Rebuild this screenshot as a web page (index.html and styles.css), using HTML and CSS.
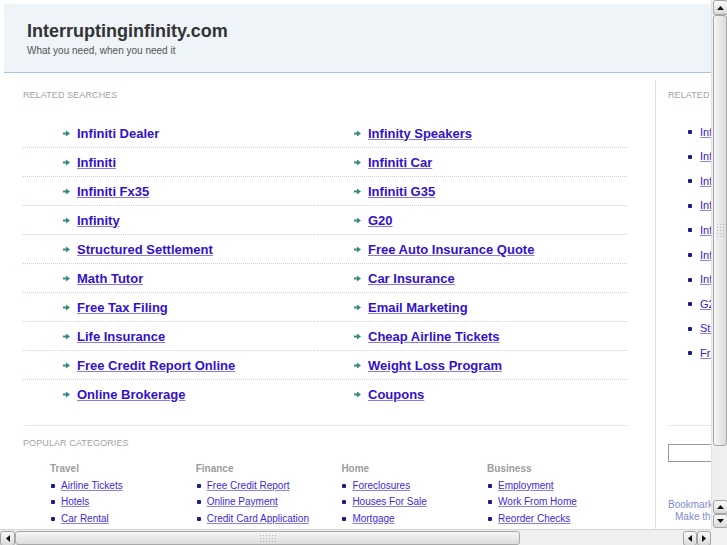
FILE: index.html
```html
<!DOCTYPE html>
<html lang="en">
<head>
    <meta charset="UTF-8">
    <title>Interruptinginfinity.com</title>
    <link rel="stylesheet" href="styles.css">
</head>
<body>
    <div class="window">
        <div class="viewport">
            <div class="page">
                <div class="header">
                    <h1>Interruptinginfinity.com</h1>
                    <p>What you need, when you need it</p>
                </div>

                <div class="content">
                    <div class="main">
                        <h2 class="label">Related Searches</h2>
                        <ul class="searches">
                            <li><a class="plain" href="#">Infiniti Dealer</a></li>
                            <li><a href="#">Infinity Speakers</a></li>
                            <li><a href="#">Infiniti</a></li>
                            <li><a href="#">Infiniti Car</a></li>
                            <li><a href="#">Infiniti Fx35</a></li>
                            <li><a href="#">Infiniti G35</a></li>
                            <li><a href="#">Infinity</a></li>
                            <li><a href="#">G20</a></li>
                            <li><a href="#">Structured Settlement</a></li>
                            <li><a href="#">Free Auto Insurance Quote</a></li>
                            <li><a href="#">Math Tutor</a></li>
                            <li><a href="#">Car Insurance</a></li>
                            <li><a href="#">Free Tax Filing</a></li>
                            <li><a href="#">Email Marketing</a></li>
                            <li><a href="#">Life Insurance</a></li>
                            <li><a href="#">Cheap Airline Tickets</a></li>
                            <li><a href="#">Free Credit Report Online</a></li>
                            <li><a href="#">Weight Loss Program</a></li>
                            <li><a href="#">Online Brokerage</a></li>
                            <li><a href="#">Coupons</a></li>
                        </ul>

                        <div class="popular">
                            <h2 class="label">Popular Categories</h2>
                            <div class="categories">
                                <div class="category">
                                    <h3>Travel</h3>
                                    <ul>
                                        <li><a href="#">Airline Tickets</a></li>
                                        <li><a href="#">Hotels</a></li>
                                        <li><a href="#">Car Rental</a></li>
                                    </ul>
                                </div>
                                <div class="category">
                                    <h3>Finance</h3>
                                    <ul>
                                        <li><a href="#">Free Credit Report</a></li>
                                        <li><a href="#">Online Payment</a></li>
                                        <li><a href="#">Credit Card Application</a></li>
                                    </ul>
                                </div>
                                <div class="category">
                                    <h3>Home</h3>
                                    <ul>
                                        <li><a href="#">Foreclosures</a></li>
                                        <li><a href="#">Houses For Sale</a></li>
                                        <li><a href="#">Mortgage</a></li>
                                    </ul>
                                </div>
                                <div class="category">
                                    <h3>Business</h3>
                                    <ul>
                                        <li><a href="#">Employment</a></li>
                                        <li><a href="#">Work From Home</a></li>
                                        <li><a href="#">Reorder Checks</a></li>
                                    </ul>
                                </div>
                            </div>
                        </div>
                    </div>

                    <div class="side">
                        <h2 class="label">Related Searches</h2>
                        <ul class="side-links">
                            <li><a href="#">Infiniti Dealer</a></li>
                            <li><a href="#">Infiniti</a></li>
                            <li><a href="#">Infiniti Fx35</a></li>
                            <li><a href="#">Infinity</a></li>
                            <li><a href="#">Infinity Speakers</a></li>
                            <li><a href="#">Infiniti Car</a></li>
                            <li><a href="#">Infiniti G35</a></li>
                            <li><a href="#">G20</a></li>
                            <li><a href="#">Structured Settlement</a></li>
                            <li><a href="#">Free Auto Insurance Quote</a></li>
                        </ul>
                        <div class="search-box">
                            <input type="text">
                        </div>
                        <div class="bookmark">
                            <p>Bookmark this page</p>
                            <p class="indent">Make this your homepage</p>
                        </div>
                    </div>
                </div>
            </div>
        </div>

        <div class="vbar">
            <div class="sbtn">
                <svg width="7" height="4" viewBox="0 0 7 4"><polygon points="0,4 7,4 3.5,0" fill="#111"/></svg>
            </div>
            <div class="thumb vthumb"><span class="grip"></span></div>
            <div class="track"></div>
            <div class="sbtn">
                <svg width="7" height="4" viewBox="0 0 7 4"><polygon points="0,4 7,4 3.5,0" fill="#111"/></svg>
            </div>
            <div class="sbtn">
                <svg width="7" height="4" viewBox="0 0 7 4"><polygon points="0,0 7,0 3.5,4" fill="#111"/></svg>
            </div>
        </div>

        <div class="hbar">
            <div class="sbtn">
                <svg width="4" height="7" viewBox="0 0 4 7"><polygon points="4,0 4,7 0,3.5" fill="#111"/></svg>
            </div>
            <div class="thumb hthumb"><span class="grip"></span></div>
            <div class="track"></div>
            <div class="sbtn">
                <svg width="4" height="7" viewBox="0 0 4 7"><polygon points="4,0 4,7 0,3.5" fill="#111"/></svg>
            </div>
            <div class="sbtn">
                <svg width="4" height="7" viewBox="0 0 4 7"><polygon points="0,0 0,7 4,3.5" fill="#111"/></svg>
            </div>
        </div>

        <div class="corner"></div>
    </div>
</body>
</html>
```

FILE: styles.css
```css
* {
    box-sizing: border-box;
}

body {
    margin: 0;
    overflow: hidden;
    font-family: "Liberation Sans", Arial, sans-serif;
    background: #ffffff;
}

ul {
    list-style: none;
    margin: 0;
    padding: 0;
}

.window {
    display: grid;
    grid-template-columns: 711px 16px;
    grid-template-rows: 529px 16px;
    width: 727px;
    height: 545px;
}

.viewport {
    overflow: hidden;
}

.page {
    width: 880px;
    padding: 4px 0 0 4px;
}

.header {
    height: 69px;
    padding: 16px 0 0 23px;
    background: #eef4f7;
    border-bottom: 1px solid #a9c2ea;
}

.header h1 {
    margin: 0;
    font-size: 18px;
    line-height: 22px;
    color: #333333;
}

.header p {
    margin: 2px 0 0;
    font-size: 10px;
    line-height: 14px;
    color: #555555;
}

.content {
    display: flex;
    margin-top: 7px;
}

.main {
    width: 651px;
    flex-shrink: 0;
    padding: 9px 28px 0 19px;
}

.label {
    margin: 0;
    font-size: 9px;
    line-height: 12px;
    font-weight: normal;
    text-transform: uppercase;
    letter-spacing: 0.1px;
    color: #a3a3a3;
}

.searches {
    display: grid;
    grid-template-columns: 291px 1fr;
    margin-top: 18px;
}

.searches li {
    display: flex;
    align-items: center;
    height: 29px;
    padding-left: 40px;
    border-bottom: 1px dotted #bcd0e8;
}

.searches li:nth-last-child(-n+2) {
    height: 28px;
    border-bottom: none;
}

.searches li::before {
    content: "";
    width: 7px;
    height: 7px;
    margin-right: 7px;
    background: url("data:image/svg+xml,%3Csvg xmlns='http://www.w3.org/2000/svg' width='7' height='7'%3E%3Crect x='0' y='2.5' width='4' height='2' fill='%23378a7d'/%3E%3Cpolygon points='3,0.5 7,3.5 3,6.5' fill='%23378a7d'/%3E%3C/svg%3E") no-repeat;
}

.searches a {
    font-size: 13px;
    font-weight: bold;
    color: #3311cc;
    text-decoration-color: #8a7ce6;
}

.searches a.plain {
    text-decoration: none;
}

.popular {
    margin-top: 17px;
    padding-top: 11px;
    border-top: 1px solid #dfe8f2;
}

.categories {
    display: grid;
    grid-template-columns: repeat(4, 145.7px);
    margin-top: 12px;
    padding-left: 27px;
}

.category h3 {
    margin: 0;
    font-size: 10px;
    line-height: 16.5px;
    color: #9c9c9c;
}

.category li {
    display: flex;
    align-items: center;
    font-size: 10px;
    line-height: 16.5px;
}

.category li::before,
.side-links li::before {
    content: "";
    width: 4px;
    height: 4px;
    margin: 0 6px 0 1px;
    border-radius: 1px;
    background: #1c1c88;
}

.category a {
    color: #3c2bd6;
    text-decoration-color: #8d82e6;
}

.side {
    flex: 1;
    padding: 9px 0 0 12px;
    border-left: 1px solid #d7e3f3;
    min-height: 460px;
}

.side-links {
    margin-top: 18.7px;
    padding-left: 19px;
}

.side-links li {
    display: flex;
    align-items: center;
    font-size: 11px;
    line-height: 24.6px;
}

.side-links li::before {
    margin-right: 8px;
}

.side-links a {
    color: #3322cc;
    text-decoration-color: #8d82e6;
}

.search-box {
    margin-top: 59px;
    padding-top: 18px;
    border-top: 1px solid #dfe8f2;
}

.search-box input {
    display: block;
    width: 130px;
    height: 18px;
    margin: 0;
    border: 1px solid #9a9a9a;
}

.bookmark {
    margin-top: 37px;
}

.bookmark p {
    margin: 0;
    font-size: 10px;
    line-height: 12.5px;
    color: #7f8bd3;
}

.bookmark .indent {
    padding-left: 7px;
}

.vbar,
.hbar {
    display: flex;
    background: #eeeeee;
}

.vbar {
    flex-direction: column;
    padding: 0 0 1px 1px;
    border-left: 1px solid #e2e2e2;
}

.hbar {
    padding: 1px 0 0;
    border-top: 1px solid #d4d4d4;
}

.sbtn {
    display: flex;
    align-items: center;
    justify-content: center;
    flex-shrink: 0;
    width: 15px;
    height: 14px;
    background: linear-gradient(#fbfbfb, #dadada);
    border: 1px solid #a4a4a4;
    border-radius: 3px;
}

.vbar .sbtn:first-child {
    height: 15px;
}

.hbar .sbtn {
    width: 14px;
    height: 15px;
}

.hbar .sbtn:first-child {
    width: 15px;
}

.track {
    flex: 1;
    background-color: #efefef;
    background-image: radial-gradient(#dedede 35%, transparent 36%);
    background-size: 2px 2px;
}

.thumb {
    display: flex;
    align-items: center;
    justify-content: center;
    flex-shrink: 0;
    border: 1px solid #a8a8a8;
    border-radius: 3px;
}

.vthumb {
    height: 431px;
    background: linear-gradient(90deg, #f6f6f6, #dcdcdc);
}

.hthumb {
    width: 505px;
    background: linear-gradient(#f6f6f6, #dcdcdc);
}

.grip {
    background-image: radial-gradient(#b4b4b4 40%, transparent 45%);
    background-size: 3px 3px;
}

.vthumb .grip {
    width: 9px;
    height: 16px;
}

.hthumb .grip {
    width: 18px;
    height: 9px;
}

.corner {
    background: #f2f2f2;
}
```
